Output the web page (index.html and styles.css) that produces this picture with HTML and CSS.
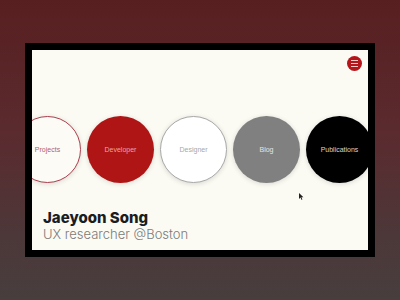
FILE: index.html
```html
<!DOCTYPE html>
<html>
<head>
<meta charset="utf-8">
<link rel="stylesheet" href="styles.css">
</head>
<body>
<div class="frame">
  <div class="screen">
    <div class="topbar">
      <div class="menu-btn"><span></span><span></span><span></span></div>
    </div>
    <div class="circles">
      <div class="circle c-projects">Projects</div>
      <div class="circle c-developer">Developer</div>
      <div class="circle c-designer">Designer</div>
      <div class="circle c-blog">Blog</div>
      <div class="circle c-pubs">Publications</div>
    </div>
    <div class="intro">
      <div class="name">Jaeyoon Song</div>
      <div class="role">UX researcher @Boston</div>
    </div>
    <svg class="cursor" width="5" height="7" viewBox="0 0 5 7"><path d="M0 0 L0 6 L1.5 4.6 L2.6 7 L3.4 6.6 L2.4 4.3 L4.4 4.3 Z" fill="#222"/></svg>
  </div>
</div>
</body>
</html>
```
FILE: styles.css
```css
html, body { margin: 0; padding: 0; }
body {
  width: 400px;
  height: 300px;
  overflow: hidden;
  background: linear-gradient(180deg, #581f20 0%, #5a2b2f 45%, #4c3839 80%, #483e3e 100%);
  font-family: "Liberation Sans", Arial, sans-serif;
}
.frame {
  margin: 43px 0 0 25px;
  width: 336px;
  height: 200px;
  border: 7px solid #000;
  background: #000;
}
.screen {
  position: relative;
  width: 336px;
  height: 200px;
  background: #fbfbf3;
  overflow: hidden;
  display: flex;
  flex-direction: column;
}
.topbar {
  display: flex;
  justify-content: flex-end;
  padding: 6px 6px 0 0;
  height: 16px;
}
.menu-btn {
  width: 15px;
  height: 15px;
  border-radius: 50%;
  background: #b4161b;
  display: flex;
  flex-direction: column;
  align-items: center;
  justify-content: center;
  gap: 1.5px;
}
.menu-btn span {
  display: block;
  width: 7px;
  height: 1.2px;
  background: #f2c9c4;
}
.circles {
  display: flex;
  gap: 6px;
  margin: 44px 0 0 -18px;
}
.circle {
  flex: 0 0 67px;
  width: 67px;
  height: 67px;
  border-radius: 50%;
  box-sizing: border-box;
  display: flex;
  align-items: center;
  justify-content: center;
  font-size: 7px;
  box-shadow: 0 1px 5px rgba(0,0,0,0.14);
}
.c-projects { background: #fcfbf6; border: 1px solid #a9414f; color: #b3606b; }
.c-developer { background: #b01516; color: #eaa3a0; }
.c-designer { background: #fff; border: 1px solid #a8a8a8; color: #a8a8a8; }
.c-blog { background: #808080; color: #e4e4e4; }
.c-pubs { background: #000; color: #d6d6d6; }
.intro {
  margin: 27px 0 0 11px;
}
.name {
  font-family: Inter, "Liberation Sans", sans-serif;
  font-weight: 800;
  font-size: 15px;
  line-height: 16px;
  color: #1c1c22;
}
.role {
  font-family: Inter, "Liberation Sans", sans-serif;
  font-weight: 300;
  font-size: 13px;
  line-height: 17px;
  color: #7a7a7a;
}
.cursor {
  position: absolute;
  left: 267px;
  top: 143px;
}
```
